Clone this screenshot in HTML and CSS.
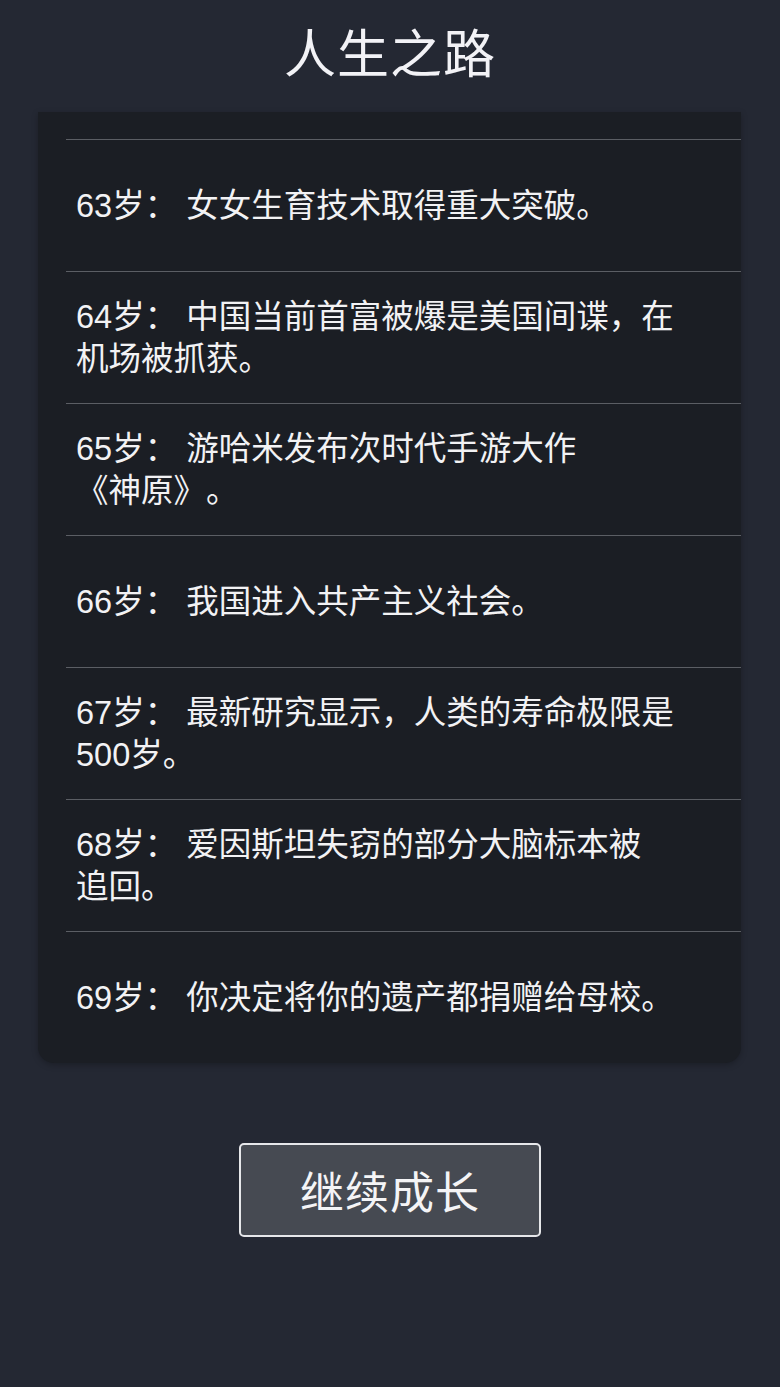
FILE: index.html
```html
<!DOCTYPE html>
<html lang="zh-CN">
<head>
<meta charset="utf-8">
<title>人生之路</title>
<link rel="stylesheet" href="styles.css">
</head>
<body>
<div class="page">
  <h1 class="title">人生之路</h1>
  <div class="card">
    <div class="row"><p class="event">63岁： 女女生育技术取得重大突破。</p></div>
    <div class="row"><p class="event">64岁： 中国当前首富被爆是美国间谍，在机场被抓获。</p></div>
    <div class="row"><p class="event">65岁： 游哈米发布次时代手游大作<span class="nw">《神原》。</span></p></div>
    <div class="row"><p class="event">66岁： 我国进入共产主义社会。</p></div>
    <div class="row"><p class="event">67岁： 最新研究显示，人类的寿命极限是500岁。</p></div>
    <div class="row"><p class="event">68岁： 爱因斯坦失窃的部分大脑标本被<br>追回。</p></div>
    <div class="row"><p class="event">69岁： 你决定将你的遗产都捐赠给母校。</p></div>
  </div>
  <div class="actions">
    <button class="btn">继续成长</button>
  </div>
</div>
</body>
</html>
```

FILE: styles.css
```css
html, body {
  margin: 0;
  padding: 0;
  background: #242833;
}
body {
  font-family: "Liberation Sans", "Noto Sans CJK SC", sans-serif;
  color: #f2f2f4;
  width: 780px;
  height: 1387px;
  overflow: hidden;
  text-spacing-trim: space-all;
}
.page {
  display: flex;
  flex-direction: column;
}
.title {
  margin: 0;
  height: 100px;
  display: flex;
  align-items: center;
  justify-content: center;
  font-family: "Noto Sans CJK SC", sans-serif;
  font-weight: 400;
  font-size: 52px;
  letter-spacing: 1px;
  color: #f2f2f6;
}
.card {
  margin: 12px 39px 0 38px;
  padding-top: 27px;
  background: #1b1e24;
  border-radius: 0 0 16px 16px;
  box-shadow: 0 2px 6px rgba(0, 0, 0, 0.25);
}
.row {
  margin-left: 28px;
  height: 132px;
  border-top: 1px solid #5b5e64;
  box-sizing: border-box;
  display: flex;
  align-items: center;
  padding: 0 60px 0 10px;
}
.event {
  margin: 0;
  font-size: 32.5px;
  line-height: 42px;
  color: #f2f2f4;
}
.nw {
  white-space: nowrap;
}
.actions {
  display: flex;
  justify-content: center;
  margin-top: 80px;
}
.btn {
  width: 302px;
  height: 94px;
  box-sizing: border-box;
  border: 2px solid #e6e7ea;
  border-radius: 5px;
  background: #464a52;
  color: #f4f4f6;
  font-family: "Noto Sans CJK SC", sans-serif;
  font-size: 44px;
  letter-spacing: 1px;
  padding: 0;
}
```
